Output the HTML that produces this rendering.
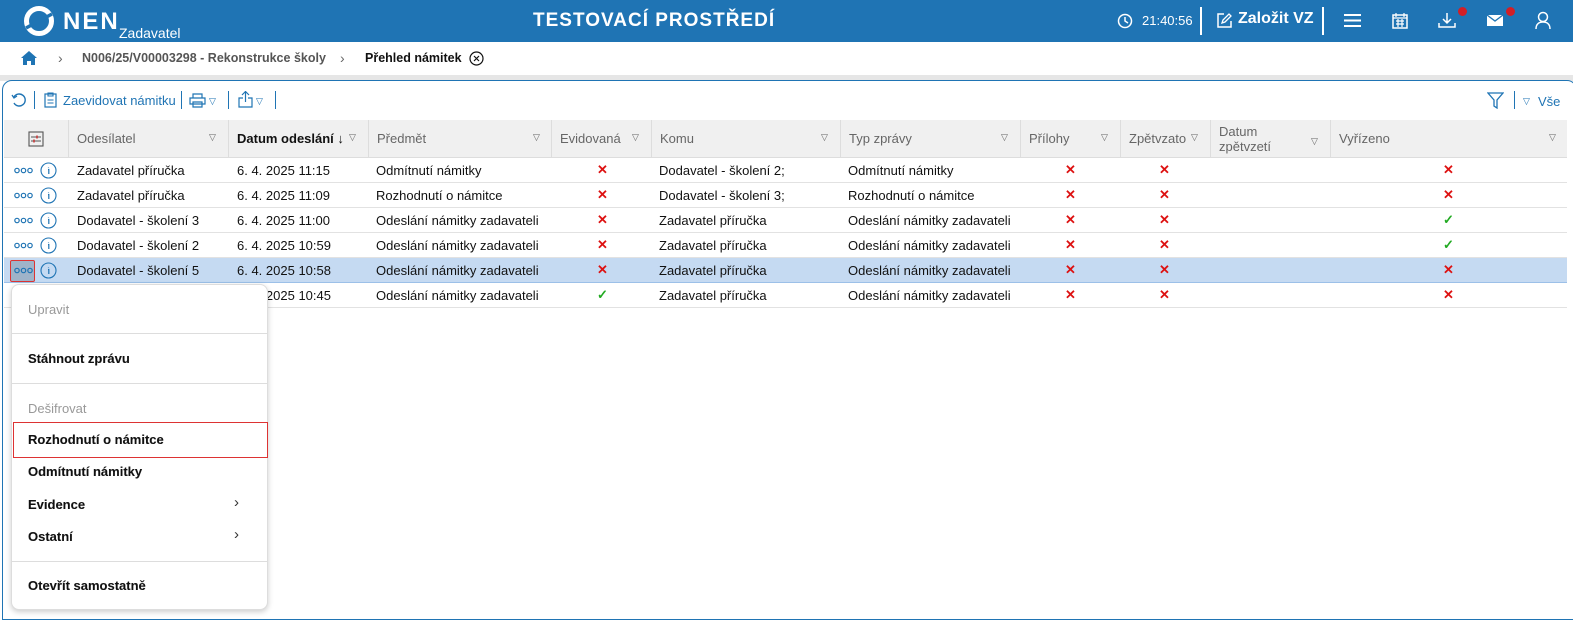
<!DOCTYPE html>
<html><head><meta charset="utf-8"><style>
*{box-sizing:border-box;margin:0;padding:0}
body{width:1573px;height:614px;overflow:hidden;background:#fff;font-family:"Liberation Sans",sans-serif;font-size:13px;color:#111;position:relative}
.a{position:absolute;white-space:nowrap}
.top{left:0;top:0;width:1573px;height:42px;background:#1f74b4;color:#fff}
.hd{top:120px;height:38px;background:#f0f0f0;border-bottom:1px solid #ddd}
.col{position:absolute;top:120px;height:38px;border-left:1px solid #ddd}
.ht{color:#666;font-size:13px}
.tri{color:#666;font-size:9px}
.row{position:absolute;left:4px;width:1563px;height:25px;border-bottom:1px solid #e2e2e2}
.x{color:#d11;font-size:13px;font-weight:bold}
.ok{color:#2a2;font-size:13px;font-weight:bold}
.menu{left:11px;top:284px;width:257px;height:326px;background:#fff;border:1px solid #ddd;border-radius:8px;box-shadow:0 2px 6px rgba(0,0,0,.2)}
.mi{position:absolute;left:16px;font-size:13px;color:#111;font-weight:600;-webkit-text-stroke:.1px #111}
.sep{position:absolute;left:0;width:255px;height:1px;background:#ddd}
</style></head><body>
<div class="a top">
 <svg class="a" style="left:22px;top:5px" width="34" height="32" viewBox="0 0 34 32"><circle cx="17" cy="16" r="12.5" fill="none" stroke="#fff" stroke-width="5"/><path d="M4 23 L30 9" stroke="#1f74b4" stroke-width="3.5"/></svg>
 <div class="a" style="left:63px;top:8px;font-size:24px;font-weight:bold;letter-spacing:2px">NEN</div>
 <div class="a" style="left:119px;top:25px;font-size:14px">Zadavatel</div>
 <div class="a" style="left:533px;top:10px;font-size:19px;font-weight:bold;letter-spacing:1px">TESTOVACÍ PROSTŘEDÍ</div>
 <svg class="a" style="left:1117px;top:13px" width="16" height="16"><circle cx="8" cy="8" r="6.5" fill="none" stroke="#fff" stroke-width="1.5"/><path d="M8 4v4l3 2" stroke="#fff" stroke-width="1.5" fill="none"/></svg>
 <div class="a" style="left:1142px;top:13px;font-size:13px">21:40:56</div>
 <div class="a" style="left:1200px;top:7px;width:2px;height:28px;background:#fff"></div>
 <svg class="a" style="left:1216px;top:12px" width="17" height="17"><path d="M8 2H2v13h13V9" fill="none" stroke="#fff" stroke-width="1.5"/><path d="M6 11l1-3 6-6 2 2-6 6z" fill="none" stroke="#fff" stroke-width="1.3"/></svg>
 <div class="a" style="left:1238px;top:10px;font-size:16px;font-weight:bold">Založit VZ</div>
 <div class="a" style="left:1322px;top:7px;width:2px;height:28px;background:#fff"></div>
 <svg class="a" style="left:1344px;top:13px" width="17" height="15"><path d="M0 2h17M0 7.5h17M0 13h17" stroke="#fff" stroke-width="2"/></svg>
 <svg class="a" style="left:1392px;top:12px" width="16" height="17"><rect x="1" y="3" width="14" height="13" fill="none" stroke="#fff" stroke-width="1.5"/><path d="M1 6h14M4 1v4M12 1v4M4 9h8M4 12h8M6 7v8M10 7v8" stroke="#fff" stroke-width="1.2"/></svg>
 <svg class="a" style="left:1438px;top:12px" width="18" height="17"><path d="M9 1v10M5 7l4 4 4-4M1 11v4h16v-4" fill="none" stroke="#fff" stroke-width="1.5"/></svg>
 <div class="a" style="left:1458px;top:7px;width:9px;height:9px;border-radius:50%;background:#d21f26"></div>
 <svg class="a" style="left:1486px;top:14px" width="18" height="13"><rect x="1" y="1" width="16" height="11" fill="#fff"/><path d="M1 1l8 6 8-6" fill="none" stroke="#1f74b4" stroke-width="1.3"/></svg>
 <div class="a" style="left:1506px;top:7px;width:9px;height:9px;border-radius:50%;background:#d21f26"></div>
 <svg class="a" style="left:1535px;top:11px" width="16" height="18"><circle cx="8" cy="6" r="4.5" fill="none" stroke="#fff" stroke-width="1.5"/><path d="M1 18c0-5 3-7 7-7s7 2 7 7" fill="none" stroke="#fff" stroke-width="1.5"/></svg>
</div>
<svg class="a" style="left:20px;top:50px" width="18" height="16"><path d="M9 1L1 8h2v7h4v-4h4v4h4V8h2z" fill="#1f74b4"/></svg>
<div class="a" style="left:58px;top:50px;color:#666;font-size:14px">›</div>
<div class="a" style="left:82px;top:51px;color:#555;font-weight:bold;font-size:12.5px">N006/25/V00003298 - Rekonstrukce školy</div>
<div class="a" style="left:340px;top:50px;color:#666;font-size:14px">›</div>
<div class="a" style="left:365px;top:51px;color:#111;font-weight:bold;font-size:12.5px">Přehled námitek</div>
<svg class="a" style="left:469px;top:51px" width="15" height="15"><circle cx="7.5" cy="7.5" r="6.5" fill="none" stroke="#111" stroke-width="1.2"/><path d="M5 5l5 5M10 5l-5 5" stroke="#111" stroke-width="1.2"/></svg>
<div class="a" style="left:0;top:75px;width:1573px;height:6px;background:#e6e6e6"></div>
<div class="a" style="left:2px;top:80px;width:1575px;height:540px;border:1px solid #1f74b4;border-radius:10px 10px 0 0;background:#fff"></div>
<svg class="a" style="left:11px;top:92px" width="16" height="16"><path d="M3 5a6 6 0 1 1 0 6" fill="none" stroke="#1f74b4" stroke-width="1.4"/><path d="M1 3l2 3 3-2" fill="none" stroke="#1f74b4" stroke-width="1.3"/></svg>
<div class="a" style="left:34px;top:91px;width:1px;height:18px;background:#1f74b4"></div>
<svg class="a" style="left:44px;top:92px" width="13" height="16"><rect x="1" y="2" width="11" height="13" fill="none" stroke="#1f74b4" stroke-width="1.2"/><path d="M4 1h5v3H4zM3.5 8h6M3.5 11h6" fill="none" stroke="#1f74b4" stroke-width="1.1"/></svg>
<div class="a" style="left:63px;top:93px;color:#1f74b4">Zaevidovat námitku</div>
<div class="a" style="left:181px;top:91px;width:1px;height:18px;background:#1f74b4"></div>
<svg class="a" style="left:189px;top:93px" width="17" height="15"><path d="M4 5V1h9v4M1 5h15v6H1zM4 9h9v5H4z" fill="none" stroke="#1f74b4" stroke-width="1.2"/></svg>
<div class="a tri" style="left:209px;top:96px;color:#1f74b4">▽</div>
<div class="a" style="left:228px;top:91px;width:1px;height:18px;background:#1f74b4"></div>
<svg class="a" style="left:238px;top:91px" width="15" height="17"><path d="M7.5 1v10M4 4l3.5-3.5L11 4M5 7H1v9h13V7h-4" fill="none" stroke="#1f74b4" stroke-width="1.2"/></svg>
<div class="a tri" style="left:256px;top:96px;color:#1f74b4">▽</div>
<div class="a" style="left:275px;top:91px;width:1px;height:18px;background:#1f74b4"></div>
<svg class="a" style="left:1487px;top:92px" width="17" height="17"><path d="M1 1h15l-6 7v8l-3-2V8z" fill="none" stroke="#1f74b4" stroke-width="1.3"/></svg>
<div class="a" style="left:1514px;top:91px;width:1px;height:18px;background:#1f74b4"></div>
<div class="a tri" style="left:1523px;top:96px;color:#1f74b4">▽</div>
<div class="a" style="left:1538px;top:94px;color:#1f74b4">Vše</div>
<div class="a hd" style="left:4px;width:1563px"></div>
<svg class="a" style="left:28px;top:131px" width="16" height="16"><rect x="1" y="1" width="14" height="14" fill="none" stroke="#555" stroke-width="1.1"/><path d="M3 6h10M3 10h10" stroke="#555"/><path d="M9 4.5v3M6 8.5v3" stroke="#c33" stroke-width="1.5"/></svg>
<div class="col" style="left:68px"></div><div class="col" style="left:228px"></div><div class="col" style="left:368px"></div><div class="col" style="left:551px"></div><div class="col" style="left:651px"></div><div class="col" style="left:840px"></div><div class="col" style="left:1020px"></div><div class="col" style="left:1120px"></div><div class="col" style="left:1210px"></div><div class="col" style="left:1330px"></div>
<div class="a ht" style="left:77px;top:131px">Odesílatel</div><div class="a tri" style="left:209px;top:132px">▽</div>
<div class="a" style="left:237px;top:131px;font-weight:bold;color:#111">Datum odeslání ↓</div><div class="a tri" style="left:349px;top:132px">▽</div>
<div class="a ht" style="left:377px;top:131px">Předmět</div><div class="a tri" style="left:533px;top:132px">▽</div>
<div class="a ht" style="left:560px;top:131px">Evidovaná</div><div class="a tri" style="left:632px;top:132px">▽</div>
<div class="a ht" style="left:660px;top:131px">Komu</div><div class="a tri" style="left:821px;top:132px">▽</div>
<div class="a ht" style="left:849px;top:131px">Typ zprávy</div><div class="a tri" style="left:1001px;top:132px">▽</div>
<div class="a ht" style="left:1029px;top:131px">Přílohy</div><div class="a tri" style="left:1101px;top:132px">▽</div>
<div class="a ht" style="left:1129px;top:131px">Zpětvzato</div><div class="a tri" style="left:1191px;top:132px">▽</div>
<div class="a ht" style="left:1219px;top:124px;line-height:15px">Datum<br>zpětvzetí</div><div class="a tri" style="left:1311px;top:136px">▽</div>
<div class="a ht" style="left:1339px;top:131px">Vyřízeno</div><div class="a tri" style="left:1549px;top:132px">▽</div>

<div class="row" style="top:158px"></div><div class="row" style="top:183px"></div><div class="row" style="top:208px"></div><div class="row" style="top:233px"></div><div class="row" style="top:258px;background:#c5daf2;border-bottom:1px solid #9cc0e8"></div><div class="row" style="top:283px"></div>
<div class="a" style="left:10px;top:260px;width:25px;height:22px;background:#9fb3c9;border:1px solid #d33;border-radius:2px"></div>

<div id="rows"></div>
<script>
var R=[["Zadavatel příručka","6. 4. 2025 11:15","Odmítnutí námitky","x","Dodavatel - školení 2;","Odmítnutí námitky","x"],
["Zadavatel příručka","6. 4. 2025 11:09","Rozhodnutí o námitce","x","Dodavatel - školení 3;","Rozhodnutí o námitce","x"],
["Dodavatel - školení 3","6. 4. 2025 11:00","Odeslání námitky zadavateli","x","Zadavatel příručka","Odeslání námitky zadavateli","ok"],
["Dodavatel - školení 2","6. 4. 2025 10:59","Odeslání námitky zadavateli","x","Zadavatel příručka","Odeslání námitky zadavateli","ok"],
["Dodavatel - školení 5","6. 4. 2025 10:58","Odeslání námitky zadavateli","x","Zadavatel příručka","Odeslání námitky zadavateli","x"],
["","6. 4. 2025 10:45","Odeslání námitky zadavateli","ok","Zadavatel příručka","Odeslání námitky zadavateli","x"]];
var h="";
R.forEach(function(r,i){var t=158+i*25,y=t+5;
h+='<svg class="a" style="left:14px;top:'+(t+9)+'px" width="20" height="7"><circle cx="3" cy="3.5" r="2.2" fill="none" stroke="#1f74b4" stroke-width="1.2"/><circle cx="9.5" cy="3.5" r="2.2" fill="none" stroke="#1f74b4" stroke-width="1.2"/><circle cx="16" cy="3.5" r="2.2" fill="none" stroke="#1f74b4" stroke-width="1.2"/></svg>';
h+='<svg class="a" style="left:40px;top:'+(t+4)+'px" width="17" height="17"><circle cx="8.5" cy="8.5" r="7.5" fill="none" stroke="#1f74b4" stroke-width="1.1"/><path d="M8.5 5v.5M8 7.5h.8v4.5" stroke="#1f74b4" stroke-width="1.2" fill="none"/></svg>';
h+='<div class="a" style="left:77px;top:'+y+'px">'+r[0]+'</div><div class="a" style="left:237px;top:'+y+'px">'+r[1]+'</div><div class="a" style="left:376px;top:'+y+'px">'+r[2]+'</div>';
h+='<div class="a '+r[3]+'" style="left:597px;top:'+(y-1)+'px">'+(r[3]=="x"?"✕":"✓")+'</div>';
h+='<div class="a" style="left:659px;top:'+y+'px">'+r[4]+'</div><div class="a" style="left:848px;top:'+y+'px">'+r[5]+'</div>';
h+='<div class="a x" style="left:1065px;top:'+(y-1)+'px">✕</div><div class="a x" style="left:1159px;top:'+(y-1)+'px">✕</div>';
h+='<div class="a '+r[6]+'" style="left:1443px;top:'+(y-1)+'px">'+(r[6]=="x"?"✕":"✓")+'</div>';});
document.getElementById("rows").innerHTML=h;
</script>
<div class="a menu">
 <div class="mi" style="top:17px;color:#999;-webkit-text-stroke:0;font-weight:normal">Upravit</div>
 <div class="sep" style="top:48px"></div>
 <div class="mi" style="top:66px">Stáhnout zprávu</div>
 <div class="sep" style="top:98px"></div>
 <div class="mi" style="top:116px;color:#999;-webkit-text-stroke:0;font-weight:normal">Dešifrovat</div>
 <div class="a" style="left:1px;top:137px;width:255px;height:36px;border:1px solid #d33"></div>
 <div class="mi" style="top:147px">Rozhodnutí o námitce</div>
 <div class="mi" style="top:179px">Odmítnutí námitky</div>
 <div class="mi" style="top:212px">Evidence</div><div class="a" style="left:222px;top:209px;font-size:15px;color:#333">›</div>
 <div class="mi" style="top:244px">Ostatní</div><div class="a" style="left:222px;top:241px;font-size:15px;color:#333">›</div>
 <div class="sep" style="top:276px"></div>
 <div class="mi" style="top:293px">Otevřít samostatně</div>
</div>
</body></html>
